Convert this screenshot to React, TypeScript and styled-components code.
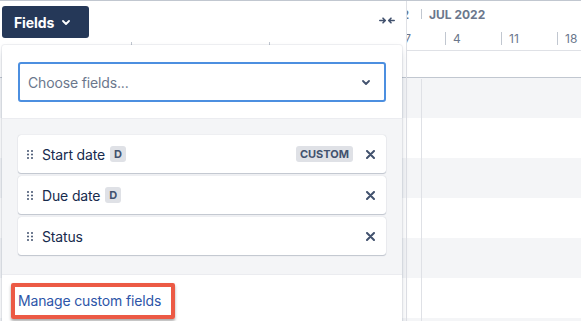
import React from 'react';
import styled, { createGlobalStyle } from 'styled-components';

const GlobalStyle = createGlobalStyle`
  html, body { margin: 0; padding: 0; background: #fff; }
  body {
    font-family: Inter, "Noto Sans", "Liberation Sans", sans-serif;
    color: #172b4d;
    -webkit-font-smoothing: antialiased;
  }
  *, *::before, *::after { box-sizing: border-box; }
`;

const Page = styled.div`
  position: relative;
  width: 581px;
  height: 321px;
  overflow: hidden;
  border-top: 1px solid #c1c7d0;
  display: grid;
  grid-template-columns: 407px 1fr;
`;

/* ---------- Sidebar (behind the popup) ---------- */
const Sidebar = styled.div`
  border-right: 1px solid #dfe1e6;
  display: flex;
  flex-direction: column;
`;

const SidebarHeader = styled.div`
  height: 77px;
  border-bottom: 1px solid #c1c7d0;
  display: flex;
  flex-direction: column;
`;

const ToolRow = styled.div`
  display: flex;
  align-items: center;
  justify-content: space-between;
  padding: 5px 11px 0 2px;
`;

const FieldsButton = styled.button`
  width: 87px;
  height: 32px;
  border: none;
  border-radius: 3px;
  background: #253858;
  color: #fff;
  font-family: inherit;
  font-weight: 700;
  font-size: 14px;
  letter-spacing: -0.1px;
  display: flex;
  align-items: center;
  gap: 8px;
  padding: 0 0 0 12px;
  cursor: pointer;
`;

const CollapseButton = styled.span`
  display: flex;
  align-items: center;
  margin-top: -4px;
  color: #42526e;
`;

const ColumnRow = styled.div`
  display: grid;
  grid-template-columns: 131px 138px 1fr;
  margin-top: 4px;
  height: 12px;
`;

const ColumnCell = styled.div<{ $divider?: boolean }>`
  border-left: ${(p) => (p.$divider ? '1px solid #c1c7d0' : 'none')};
`;

const StripeList = styled.div`
  display: flex;
  flex-direction: column;
  flex: 1;
`;

const Stripe = styled.div<{ $odd: boolean }>`
  height: 40px;
  flex-shrink: 0;
  background: ${(p) => (p.$odd ? '#fff' : '#f4f5f7')};
`;

/* ---------- Timeline ---------- */
const Timeline = styled.div`
  position: relative;
  display: flex;
  flex-direction: column;
  overflow: hidden;
`;

const TimelineHeader = styled.div`
  height: 77px;
  border-bottom: 1px solid #c1c7d0;
  display: flex;
  flex-direction: column;
`;

const MonthRow = styled.div`
  height: 26px;
  display: flex;
  align-items: center;
  font-size: 12px;
  font-weight: 700;
  color: #6b778c;
  white-space: nowrap;
`;

const MonthCell = styled.div<{ $w?: number; $clip?: boolean }>`
  position: relative;
  flex: ${(p) => (p.$w ? `0 0 ${p.$w}px` : '1')};
  display: flex;
  justify-content: ${(p) => (p.$clip ? 'flex-end' : 'flex-start')};
  overflow: hidden;
  padding: ${(p) => (p.$clip ? '0 12px 0 0' : '0 0 0 8px')};
  &::before {
    content: '';
    display: ${(p) => (p.$clip ? 'none' : 'block')};
    position: absolute;
    left: 0;
    top: 2px;
    height: 10px;
    border-left: 1px solid #c1c7d0;
  }
`;

const DateRow = styled.div`
  height: 24px;
  border-bottom: 1px solid #dfe1e6;
  display: flex;
  align-items: center;
  margin-left: -18px;
  font-size: 12px;
  color: #6b778c;
  white-space: nowrap;
`;

const DateCell = styled.div`
  position: relative;
  flex: 0 0 56px;
  padding-left: 8px;
  &::before {
    content: '';
    position: absolute;
    left: 0;
    top: 1px;
    height: 13px;
    border-left: 1px solid #c1c7d0;
  }
`;

const SprintRow = styled.div`
  flex: 1;
`;

const MonthLine = styled.div`
  position: absolute;
  left: 14px;
  top: 78px;
  bottom: 0;
  border-left: 1px solid #dfe1e6;
`;

/* ---------- Fields popup ---------- */
const Popup = styled.div`
  position: absolute;
  left: 2px;
  top: 44px;
  width: 400px;
  background: #fff;
  border-radius: 3px;
  box-shadow: 0 0 0 1px rgba(9, 30, 66, 0.06), 0 4px 8px -2px rgba(9, 30, 66, 0.25);
  display: flex;
  flex-direction: column;
`;

const PickerSection = styled.div`
  padding: 17px 16px 16px;
  border-bottom: 1px solid #ebecf0;
`;

const Select = styled.div`
  height: 40px;
  border: 2px solid #4c8fe0;
  border-radius: 3px;
  background: #fff;
  display: flex;
  align-items: center;
  justify-content: space-between;
  padding: 0 14px 0 8px;
  font-size: 14px;
  letter-spacing: -0.15px;
  color: #6b778c;
`;

const ListSection = styled.div`
  background: #f4f5f7;
  padding: 16px 16px 19px;
  border-bottom: 1px solid #ebecf0;
  display: flex;
  flex-direction: column;
  gap: 3px;
`;

const FieldCard = styled.div`
  height: 38px;
  background: #fff;
  border-radius: 3px;
  box-shadow: 0 1px 1px rgba(9, 30, 66, 0.2), 0 0 1px rgba(9, 30, 66, 0.25);
  display: flex;
  align-items: center;
  padding: 0 11px 0 9px;
`;

const FieldName = styled.span`
  margin-left: 9px;
  font-size: 14px;
  letter-spacing: -0.15px;
  color: #172b4d;
`;

const Lozenge = styled.span<{ $wide?: boolean }>`
  height: 16px;
  min-width: 16px;
  padding: 0 ${(p) => (p.$wide ? '4px' : '0')};
  margin-left: ${(p) => (p.$wide ? 'auto' : '5px')};
  border-radius: 3px;
  background: #dfe1e6;
  color: #42526e;
  font-size: 11px;
  font-weight: 700;
  display: inline-flex;
  align-items: center;
  justify-content: center;
  text-transform: uppercase;
`;

const RemoveButton = styled.span<{ $push?: boolean }>`
  margin-left: ${(p) => (p.$push ? 'auto' : '13px')};
  display: flex;
  color: #42526e;
`;

const Footer = styled.div`
  padding: 15px 16px 16px;
`;

const ManageLink = styled.a`
  position: relative;
  display: inline-block;
  font-size: 14px;
  line-height: 20px;
  letter-spacing: -0.15px;
  color: #2d55a8;
  text-decoration: none;
  &::after {
    content: '';
    position: absolute;
    left: -7px;
    top: -8px;
    width: 164px;
    height: 36px;
    border: 4px solid #ec5a45;
    border-radius: 2px;
    box-shadow: 0 2px 3px rgba(0, 0, 0, 0.35);
  }
`;

/* ---------- Icons ---------- */
const Chevron = ({ color }: { color: string }) => (
  <svg width="8" height="5" viewBox="0 0 8 5" fill="none">
    <path d="M1 1 L4 4 L7 1" stroke={color} strokeWidth="1.8" strokeLinecap="round" strokeLinejoin="round" />
  </svg>
);

const CollapseIcon = () => (
  <svg width="16" height="7" viewBox="0 0 16 7" fill="none" stroke="currentColor" strokeWidth="1.6" strokeLinecap="round" strokeLinejoin="round">
    <path d="M0.8 3.5 H6.2 M4 1.2 L6.3 3.5 L4 5.8" />
    <path d="M15.2 3.5 H9.8 M12 1.2 L9.7 3.5 L12 5.8" />
  </svg>
);

const DragHandle = () => (
  <svg width="6" height="9" viewBox="0 0 6 9" fill="#42526e">
    <circle cx="1" cy="1" r="1" />
    <circle cx="5" cy="1" r="1" />
    <circle cx="1" cy="4.5" r="1" />
    <circle cx="5" cy="4.5" r="1" />
    <circle cx="1" cy="8" r="1" />
    <circle cx="5" cy="8" r="1" />
  </svg>
);

const CrossIcon = () => (
  <svg width="9" height="9" viewBox="0 0 9 9" fill="none" stroke="currentColor" strokeWidth="2" strokeLinecap="round">
    <path d="M1 1 L8 8 M8 1 L1 8" />
  </svg>
);

type Field = { name: string; derived?: boolean; custom?: boolean };

const fields: Field[] = [
  { name: 'Start date', derived: true, custom: true },
  { name: 'Due date', derived: true },
  { name: 'Status' },
];

const stripes = Array.from({ length: 7 }, (_, i) => i);

export default function App() {
  return (
    <>
      <GlobalStyle />
      <Page>
        <Sidebar>
          <SidebarHeader>
            <ToolRow>
              <FieldsButton>
                Fields
                <Chevron color="#ffffff" />
              </FieldsButton>
              <CollapseButton>
                <CollapseIcon />
              </CollapseButton>
            </ToolRow>
            <ColumnRow>
              <ColumnCell />
              <ColumnCell $divider />
              <ColumnCell $divider />
            </ColumnRow>
          </SidebarHeader>
          <StripeList>
            {stripes.map((i) => (
              <Stripe key={i} $odd={i % 2 === 1} />
            ))}
          </StripeList>
        </Sidebar>

        <Timeline>
          <TimelineHeader>
            <MonthRow>
              <MonthCell $w={14} $clip>
                JUN 2022
              </MonthCell>
              <MonthCell>JUL 2022</MonthCell>
            </MonthRow>
            <DateRow>
              {['27', '4', '11', '18'].map((d) => (
                <DateCell key={d}>{d}</DateCell>
              ))}
            </DateRow>
            <SprintRow />
          </TimelineHeader>
          <StripeList>
            {stripes.map((i) => (
              <Stripe key={i} $odd={i % 2 === 1} />
            ))}
          </StripeList>
          <MonthLine />
        </Timeline>

        <Popup>
          <PickerSection>
            <Select>
              Choose fields...
              <Chevron color="#42526e" />
            </Select>
          </PickerSection>
          <ListSection>
            {fields.map((f) => (
              <FieldCard key={f.name}>
                <DragHandle />
                <FieldName>{f.name}</FieldName>
                {f.derived && <Lozenge>D</Lozenge>}
                {f.custom && <Lozenge $wide>Custom</Lozenge>}
                <RemoveButton $push={!f.custom}>
                  <CrossIcon />
                </RemoveButton>
              </FieldCard>
            ))}
          </ListSection>
          <Footer>
            <ManageLink href="#">Manage custom fields</ManageLink>
          </Footer>
        </Popup>
      </Page>
    </>
  );
}
